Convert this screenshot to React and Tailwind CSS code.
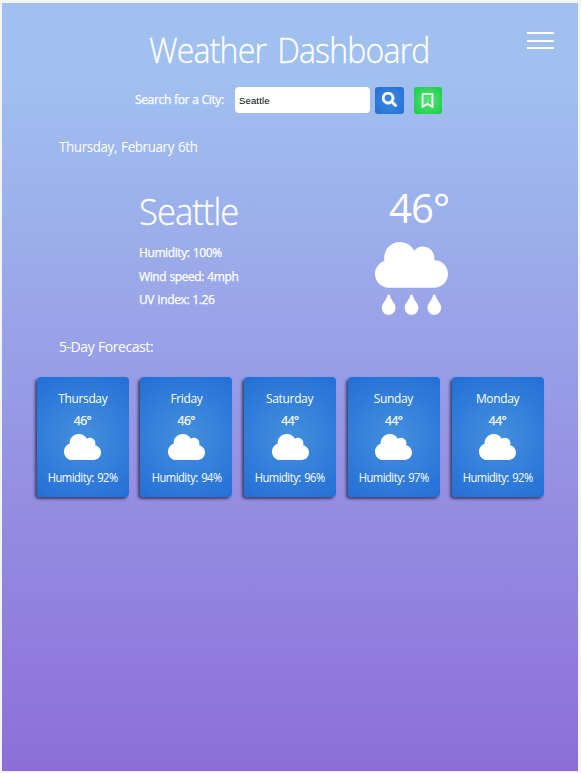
import { FaCloud, FaCloudRain, FaSearch, FaRegBookmark } from "react-icons/fa";

const forecast = [
  { day: "Thursday", temp: 46, humidity: 92 },
  { day: "Friday", temp: 46, humidity: 94 },
  { day: "Saturday", temp: 44, humidity: 96 },
  { day: "Sunday", temp: 44, humidity: 97 },
  { day: "Monday", temp: 44, humidity: 92 },
];

function DayCard({ day, temp, humidity }) {
  return (
    <article className="flex h-[120px] w-[92px] flex-col items-center rounded bg-[radial-gradient(circle,#4590de,#236fd6)] pt-3 shadow-[-2px_2px_3px_#3e3e6a] whitespace-nowrap">
      <h3 className="scale-x-[0.92] text-[13px] leading-[18px] tracking-[-0.35px]">{day}</h3>
      <p className="mt-[5px] text-[12px] leading-[18px] tracking-[-0.5px] [-webkit-text-stroke:0.25px_white]">{temp}°</p>
      <FaCloud className="mt-[2px] h-[30px] w-[37px]" />
      <p className="mt-[7px] scale-x-[0.93] text-[12px] leading-[18px] tracking-[-0.5px] [word-spacing:1px]">Humidity: {humidity}%</p>
    </article>
  );
}

export default function App() {
  return (
    <div className="h-[773px] w-[581px] bg-[#f3f4f5] pt-[3px] pl-[2px] font-['Open_Sans',sans-serif] text-white">
      <main className="h-[768px] w-[576px] overflow-hidden bg-[linear-gradient(#a0c0f0_0%,#a0c0f0_10%,#8d6ed9_100%)]">
        <header className="flex h-[84px] items-start justify-between pr-[24px] pl-[147px]">
          <h1 className="origin-left scale-x-[0.915] pt-[23px] text-[35px] leading-[48px] font-light tracking-[-0.9px] whitespace-nowrap [word-spacing:4px] [-webkit-text-stroke:0.3px_white]">Weather Dashboard</h1>
          <button className="mt-[29px] flex w-[27px] flex-col gap-[5.5px]" aria-label="Menu">
            <span className="h-[2px] w-full bg-white" />
            <span className="h-[2px] w-full bg-white" />
            <span className="h-[2px] w-full bg-white" />
          </button>
        </header>

        <form className="flex h-[26px] items-center pl-[133px]">
          <label htmlFor="city" className="w-[100px] text-[12px] tracking-[-0.35px] whitespace-nowrap [word-spacing:0.3px] [-webkit-text-stroke:0.25px_white]">Search for a City:</label>
          <input id="city" defaultValue="Seattle" className="h-[26px] w-[135px] rounded bg-white px-[4px] font-['Liberation_Sans',sans-serif] text-[9.5px] tracking-[0.15px] text-black" />
          <button type="button" aria-label="Search" className="ml-[5px] flex h-[27px] w-[29px] items-center justify-center rounded-[3px] bg-[radial-gradient(circle,#3c8ae0,#236fd6)] pb-[1px]">
            <FaSearch className="size-[15px] stroke-white stroke-[16]" />
          </button>
          <button type="button" aria-label="Save city" className="ml-[10px] flex h-[27px] w-[28px] items-center justify-center rounded-[3px] bg-[radial-gradient(circle,#5ee27a,#12cd43)] pr-[1px]">
            <FaRegBookmark className="size-[15px] stroke-white stroke-[12]" />
          </button>
        </form>

        <p className="mt-[24px] origin-left scale-x-[0.95] pl-[60px] text-[14px] leading-5 tracking-[-0.35px] [word-spacing:1px]">Thursday, February 6th</p>

        <section className="mt-[29px] flex h-[134px] pl-[137px]">
          <div className="w-[236px]">
            <h2 className="origin-left scale-x-[0.96] pt-[2px] text-[36px] leading-[48px] font-light tracking-[-1px] [-webkit-text-stroke:0.3px_white]">Seattle</h2>
            <ul className="mt-[5px] text-[12px] leading-[23.5px] tracking-[-0.4px] [word-spacing:0.5px] [-webkit-text-stroke:0.25px_white]">
              <li>Humidity: 100%</li>
              <li>Wind speed: 4mph</li>
              <li>UV Index: 1.26</li>
            </ul>
          </div>
          <div className="w-[73px]">
            <p className="-mt-[6px] h-[61.5px] pl-[14px] text-[40px] leading-[55px] tracking-[-0.9px]">46°</p>
            <FaCloudRain className="size-[73px]" />
          </div>
        </section>

        <h2 className="mt-[17px] pl-[57px] text-[14px] leading-5 tracking-[-0.45px] [word-spacing:0.7px]">5-Day Forecast:</h2>

        <section className="mt-[19.5px] flex gap-[11.75px] pl-[34.5px]">
          {forecast.map((item) => (
            <DayCard key={item.day} {...item} />
          ))}
        </section>
      </main>
    </div>
  );
}
